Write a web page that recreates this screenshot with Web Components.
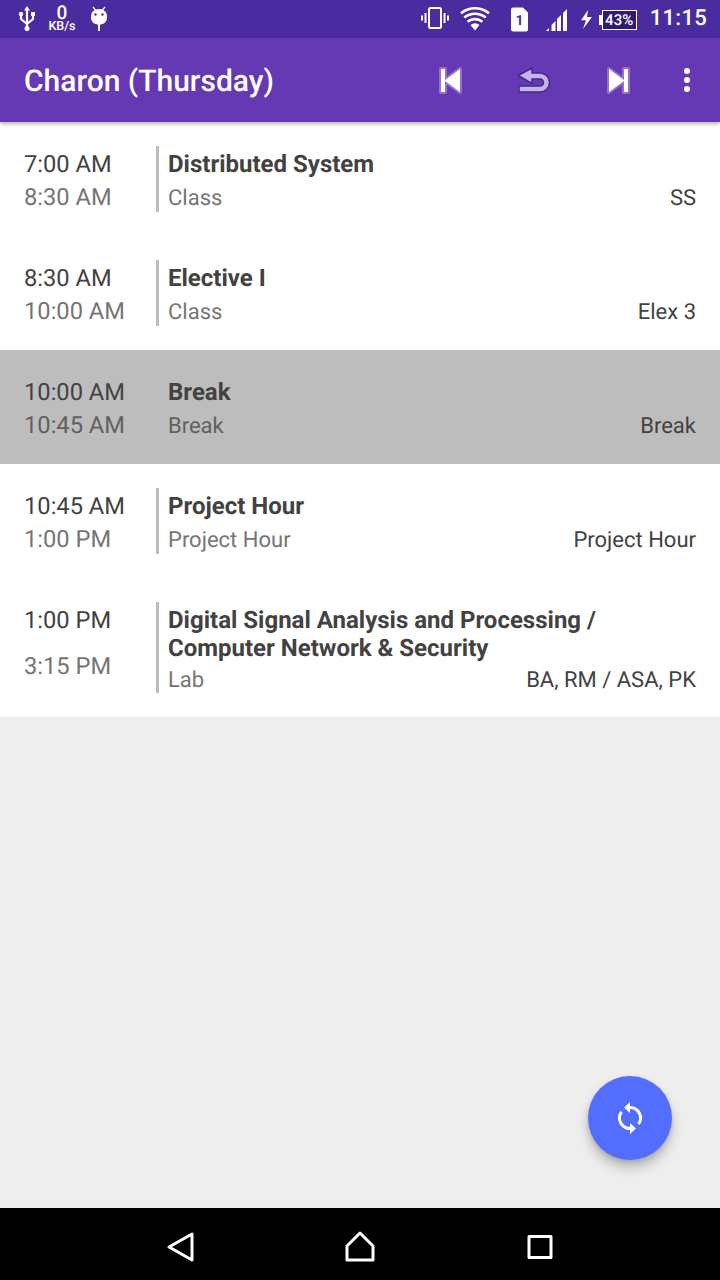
<!DOCTYPE html>
<html>
<head>
<meta charset="utf-8">
<title>Charon</title>
<style>
html, body { margin: 0; padding: 0; }
body { width: 720px; height: 1280px; overflow: hidden; font-family: Roboto, "Liberation Sans", sans-serif; text-rendering: geometricPrecision; }
</style>
</head>
<body>
<app-screen>
  <status-bar slot="top"></status-bar>
  <app-toolbar slot="top" heading="Charon (Thursday)"></app-toolbar>
  <routine-row start="7:00 AM" end="8:30 AM" kind="Class" who="SS">Distributed System</routine-row>
  <routine-row start="8:30 AM" end="10:00 AM" kind="Class" who="Elex 3">Elective I</routine-row>
  <routine-row start="10:00 AM" end="10:45 AM" kind="Break" who="Break" off>Break</routine-row>
  <routine-row start="10:45 AM" end="1:00 PM" kind="Project Hour" who="Project Hour">Project Hour</routine-row>
  <routine-row start="1:00 PM" end="3:15 PM" kind="Lab" who="BA, RM / ASA, PK" tall>Digital Signal Analysis and Processing / Computer Network &amp; Security</routine-row>
  <sync-fab slot="over"></sync-fab>
  <nav-bar slot="bottom"></nav-bar>
</app-screen>

<script>
class AppScreen extends HTMLElement {
    constructor() {
        super()
        this.shadowDOM = this.attachShadow({mode: "open"})
    }
    connectedCallback() {
        this.shadowDOM.innerHTML = `
            <style>
            :host { display: flex; flex-direction: column; width: 720px; height: 1280px; background: #eeeeee; }
            .list { flex: 1; position: relative; display: flex; flex-direction: column; }
            .rows { background: #fff; }
            </style>
            <slot name="top"></slot>
            <div class="list">
                <div class="rows"><slot></slot></div>
                <slot name="over"></slot>
            </div>
            <slot name="bottom"></slot>
        `
    }
}

class StatusBar extends HTMLElement {
    constructor() {
        super()
        this.shadowDOM = this.attachShadow({mode: "open"})
    }
    connectedCallback() {
        this.shadowDOM.innerHTML = `
            <style>
            :host { display: flex; align-items: center; height: 38px; background: #4b2ca0; color: #fff; padding: 0 13px 0 18px; box-sizing: border-box; }
            svg { display: block; flex: none; }
            .speed { display: flex; flex-direction: column; align-items: center; width: 28px; margin-left: 12px; }
            .speed b { font: 500 19px/14px Roboto, sans-serif; }
            .speed i { font: 500 12.500px/10px Roboto, sans-serif; margin-top: 2px; }
            .right { margin-left: auto; display: flex; align-items: center; }
            .batt { display: flex; align-items: center; margin-left: 7px; margin-top: 1px; }
            .batt .cap { width: 3px; height: 10px; background: #fff; }
            .batt .box { width: 33px; height: 18px; border: 1px solid #fff; background: #2f1b72; font: 500 15px/18px Roboto, sans-serif; text-align: center; }
            .clock { font: 500 22px/38px Roboto, sans-serif; letter-spacing: 0.3px; margin-left: 13px; }
            </style>
            <svg width="18" height="26" viewBox="0 0 18 26" fill="none" stroke="#fff" stroke-width="2.200">
                <path d="M9 4v18M3 8v5l6 5M15 8v5l-6 5"/>
                <path d="M9 0l3 4.500H6z" fill="#fff" stroke="none"/>
                <circle cx="9" cy="22.500" r="2.500" fill="#fff" stroke="none"/>
                <circle cx="3" cy="8" r="2.200" fill="#fff" stroke="none"/>
                <rect x="13" y="6" width="4" height="4" fill="#fff" stroke="none"/>
            </svg>
            <div class="speed"><b>0</b><i>KB/s</i></div>
            <svg style="margin-left:14px" width="18" height="26" viewBox="0 0 18 26" fill="#fff">
                <path d="M3 1l3 3.500M15 1l-3 3.500" stroke="#fff" stroke-width="1.200"/>
                <path d="M9 3c5 0 8 3 8 8s-3 7.500-8 7.500S1 16 1 11s3-8 8-8z"/>
                <rect x="8" y="18" width="2" height="7"/>
                <circle cx="5.500" cy="8.500" r="1.200" fill="#4b2ca0"/>
                <circle cx="12.500" cy="8.500" r="1.200" fill="#4b2ca0"/>
            </svg>
            <div class="right">
                <svg style="margin-bottom:2px" width="28" height="24" viewBox="0 0 28 24" fill="none" stroke="#fff">
                    <rect x="8" y="2" width="12" height="20" rx="1.500" stroke-width="2"/>
                    <path d="M4.500 7v10M1 9.500v5M23.500 7v10M27 9.500v5" stroke-width="2"/>
                </svg>
                <svg style="margin-left:11px" width="30" height="24" viewBox="0 0 30 23" fill="#fff">
                    <path d="M15 23l-4.500-5.600a7 7 0 0 1 9 0z"/>
                    <path d="M7.600 14.300a11.500 11.500 0 0 1 14.800 0" fill="none" stroke="#fff" stroke-width="2.600"/>
                    <path d="M4.300 10a17 17 0 0 1 21.400 0" fill="none" stroke="#fff" stroke-width="2.600"/>
                    <path d="M1 5.800a22 22 0 0 1 28 0" fill="none" stroke="#fff" stroke-width="2.600"/>
                </svg>
                <svg style="margin-left:20px" width="19" height="25" viewBox="0 0 19 25">
                    <path d="M3 .5h10l5 5v17a2 2 0 0 1-2 2H3a2 2 0 0 1-2-2v-20a2 2 0 0 1 2-2z" fill="#fff"/>
                    <text x="9.500" y="18" text-anchor="middle" font-family="Roboto" font-weight="700" font-size="14" fill="#4b2ca0">1</text>
                </svg>
                <svg style="margin-left:17px;margin-top:2px" width="22" height="22" viewBox="0 0 22 22" fill="#fff">
                    <path d="M0 22l3-3v3zM5.500 22v-6l4-4v10zM11 22V10l4-4v16zM17 22V4l4-4v22z"/>
                </svg>
                <svg style="margin-left:13px" width="11" height="19" viewBox="1 0 11 22" preserveAspectRatio="none" fill="#fff">
                    <path d="M8 0L1 12h5l-3 10 9-14H7z"/>
                </svg>
                <div class="batt"><span class="cap"></span><span class="box">43%</span></div>
                <span class="clock">11:15</span>
            </div>
        `
    }
}

class AppToolbar extends HTMLElement {
    constructor() {
        super()
        this.shadowDOM = this.attachShadow({mode: "open"})
    }
    connectedCallback() {
        this.shadowDOM.innerHTML = `
            <style>
            :host { display: flex; align-items: center; height: 84px; background: #6539b3; color: #fff; padding-left: 24px; box-shadow: 0 2px 4px rgba(0,0,0,.3); position: relative; z-index: 1; flex: none; }
            h1 { margin: 0; padding-top: 4px; font: 500 30px/80px Roboto, sans-serif; }
            .icons { margin-left: auto; display: grid; grid-template-columns: 84px 84px 84px 54px; justify-items: center; align-items: center; padding-right: 6px; }
            svg { display: block; }
            </style>
            <h1>${this.getAttribute("heading")}</h1>
            <div class="icons">
                <svg width="26" height="30" viewBox="0 0 26 30">
                    <path d="M4 4h4v11L23 4v23L8 16v11H4z" fill="#fff" stroke="#fff" stroke-opacity=".3" stroke-width="4" stroke-linejoin="round" paint-order="stroke"/>
                </svg>
                <svg width="36" height="30" viewBox="0 0 36 30">
                    <path d="M16 3v5h8a9.500 9.500 0 0 1 0 19H3v-6h21a3.500 3.500 0 0 0 0-7h-8v4.500L2 10.500z" fill="#c4b3e5" stroke="#43298c" stroke-width="1.500" stroke-linejoin="round"/>
                </svg>
                <svg width="26" height="30" viewBox="0 0 26 30">
                    <path d="M23 4h-4v11L4 4v23l15-11v11h4z" fill="#fff" stroke="#fff" stroke-opacity=".3" stroke-width="4" stroke-linejoin="round" paint-order="stroke"/>
                </svg>
                <svg width="8" height="26" viewBox="0 0 8 26" fill="#fff">
                    <circle cx="4" cy="4" r="3"/><circle cx="4" cy="13" r="3"/><circle cx="4" cy="22" r="3"/>
                </svg>
            </div>
        `
    }
}

class RoutineRow extends HTMLElement {
    constructor() {
        super()
        this.shadowDOM = this.attachShadow({mode: "open"})
    }
    connectedCallback() {
        this.shadowDOM.innerHTML = `
            <style>
            :host { display: grid; grid-template-columns: 132px 1fr; padding: 24px; background: #fff; color: #424242; font: 400 24px/30px Roboto, sans-serif; }
            :host([off]) { background: #bdbdbd; }
            .times { display: flex; flex-direction: column; justify-content: space-between; padding-top: 3px; font-size: 23.700px; }
            :host([tall]) .times { padding-bottom: 12px; }
            .end { color: #757575; }
            :host([off]) .end, :host([off]) .kind { color: #616161; }
            .main { border-left: 3px solid #bdbdbd; padding-left: 9px; }
            :host([off]) .main { border-color: transparent; }
            .title { font-weight: 700; line-height: 28px; padding: 4px 0 8px; }
            :host([tall]) .title { padding-bottom: 6px; }
            .meta { display: flex; justify-content: space-between; font-size: 22px; line-height: 26px; }
            :host([tall]) .meta { margin-bottom: -1px; }
            .kind { color: #757575; }
            </style>
            <div class="times">
                <span>${this.getAttribute("start")}</span>
                <span class="end">${this.getAttribute("end")}</span>
            </div>
            <div class="main">
                <div class="title"><slot></slot></div>
                <div class="meta">
                    <span class="kind">${this.getAttribute("kind")}</span>
                    <span>${this.getAttribute("who")}</span>
                </div>
            </div>
        `
    }
}

class SyncFab extends HTMLElement {
    constructor() {
        super()
        this.shadowDOM = this.attachShadow({mode: "open"})
    }
    connectedCallback() {
        this.shadowDOM.innerHTML = `
            <style>
            :host { position: absolute; right: 48px; bottom: 48px; width: 84px; height: 84px; border-radius: 50%; background: #536dfe; box-shadow: 0 8px 12px rgba(0,0,0,.22), 0 2px 4px rgba(0,0,0,.12); display: flex; align-items: center; justify-content: center; }
            svg { display: block; }
            </style>
            <svg width="34" height="34" viewBox="0 0 34 34" fill="none">
                <path d="M17 6.500a10.500 10.500 0 0 1 8.500 16.700" stroke="#fff" stroke-width="3"/>
                <path d="M17 27.500a10.500 10.500 0 0 1-8.500-16.700" stroke="#fff" stroke-width="3"/>
                <path d="M17 1v11L11 6.500zM17 33V22l6 5.500z" fill="#fff"/>
            </svg>
        `
    }
}

class NavBar extends HTMLElement {
    constructor() {
        super()
        this.shadowDOM = this.attachShadow({mode: "open"})
    }
    connectedCallback() {
        this.shadowDOM.innerHTML = `
            <style>
            :host { display: flex; align-items: center; justify-content: center; gap: 144px; height: 72px; padding-top: 6px; box-sizing: border-box; background: #000; flex: none; }
            svg { display: block; fill: none; stroke: #fff; stroke-width: 3; stroke-linejoin: round; }
            </style>
            <svg width="36" height="36" viewBox="0 0 36 36"><path d="M30 5v26L7 18z"/></svg>
            <svg width="36" height="36" viewBox="0 0 36 36"><path d="M18 4l13 13v14H5V17z"/></svg>
            <svg width="36" height="36" viewBox="0 0 36 36"><rect x="7" y="7.500" width="22" height="21"/></svg>
        `
    }
}

customElements.define("app-screen", AppScreen)
customElements.define("status-bar", StatusBar)
customElements.define("app-toolbar", AppToolbar)
customElements.define("routine-row", RoutineRow)
customElements.define("sync-fab", SyncFab)
customElements.define("nav-bar", NavBar)
</script>
</body>
</html>
